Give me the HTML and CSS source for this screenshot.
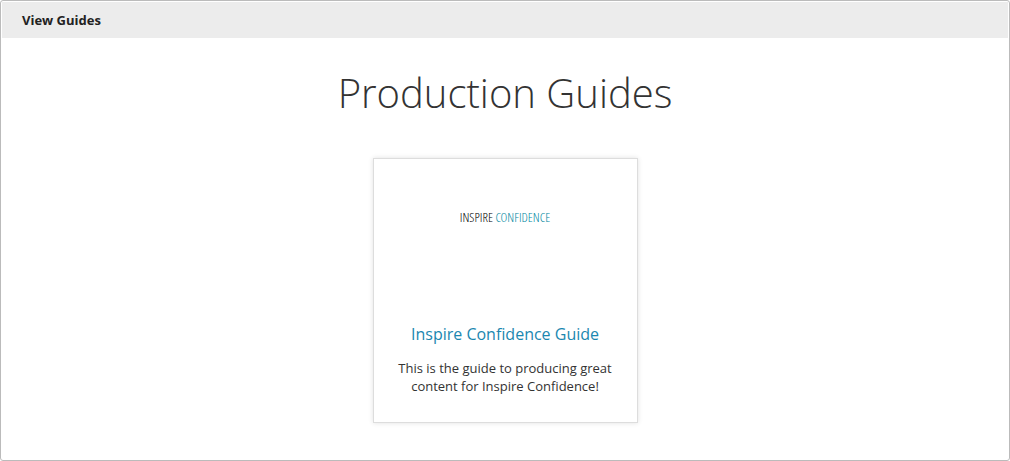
FILE: index.html
```html
<!DOCTYPE html>
<html lang="en">
<head>
<meta charset="utf-8">
<title>View Guides</title>
<link rel="stylesheet" href="styles.css">
</head>
<body>
<main class="panel">
  <header class="panel-header">View Guides</header>
  <section class="content">
    <h1 class="title">Production Guides</h1>
    <article class="card">
      <div class="logo"><span class="logo-dark">INSPIRE</span> CONFIDENCE</div>
      <h2 class="card-title"><a class="card-link" href="#guide">Inspire Confidence Guide</a></h2>
      <p class="card-text">This is the guide to producing great content for Inspire Confidence!</p>
    </article>
  </section>
</main>
</body>
</html>
```

FILE: styles.css
```css
* { box-sizing: border-box; }
body {
  margin: 0;
  font-family: "Open Sans", sans-serif;
  color: #333;
  background: #fff;
}
.panel {
  min-height: 100vh;
  border: 1px solid #bbb;
  border-radius: 3px;
  padding: 1px;
  background: #fff;
}
.panel-header {
  padding: 9px 20px;
  background: #ececec;
  font-size: 13px;
  line-height: 18px;
  font-weight: 700;
  color: #222;
}
.content {
  display: flex;
  flex-direction: column;
  align-items: center;
  padding: 27px 20px 36px;
}
.title {
  margin: 0 0 37px;
  font-size: 40px;
  line-height: 56px;
  font-weight: 300;
  text-align: center;
}
.card {
  width: 100%;
  max-width: 265px;
  padding: 0 20px 27px;
  border: 1px solid #ddd;
  box-shadow: 0 0 5px rgba(0, 0, 0, 0.12);
  text-align: center;
}
.logo {
  padding: 50px 0 96px;
  font-family: "Open Sans Condensed Light", "Open Sans Condensed", sans-serif;
  font-size: 13px;
  line-height: 16px;
  color: #0088a2;
}
.logo-dark { color: #000; }
.card-title {
  margin: 0 0 12px;
  font-size: 16px;
  line-height: 26px;
  font-weight: 400;
}
.card-link { color: #1b87b0; text-decoration: none; }
.card-text {
  margin: 0;
  font-size: 13px;
  line-height: 18px;
}
```
